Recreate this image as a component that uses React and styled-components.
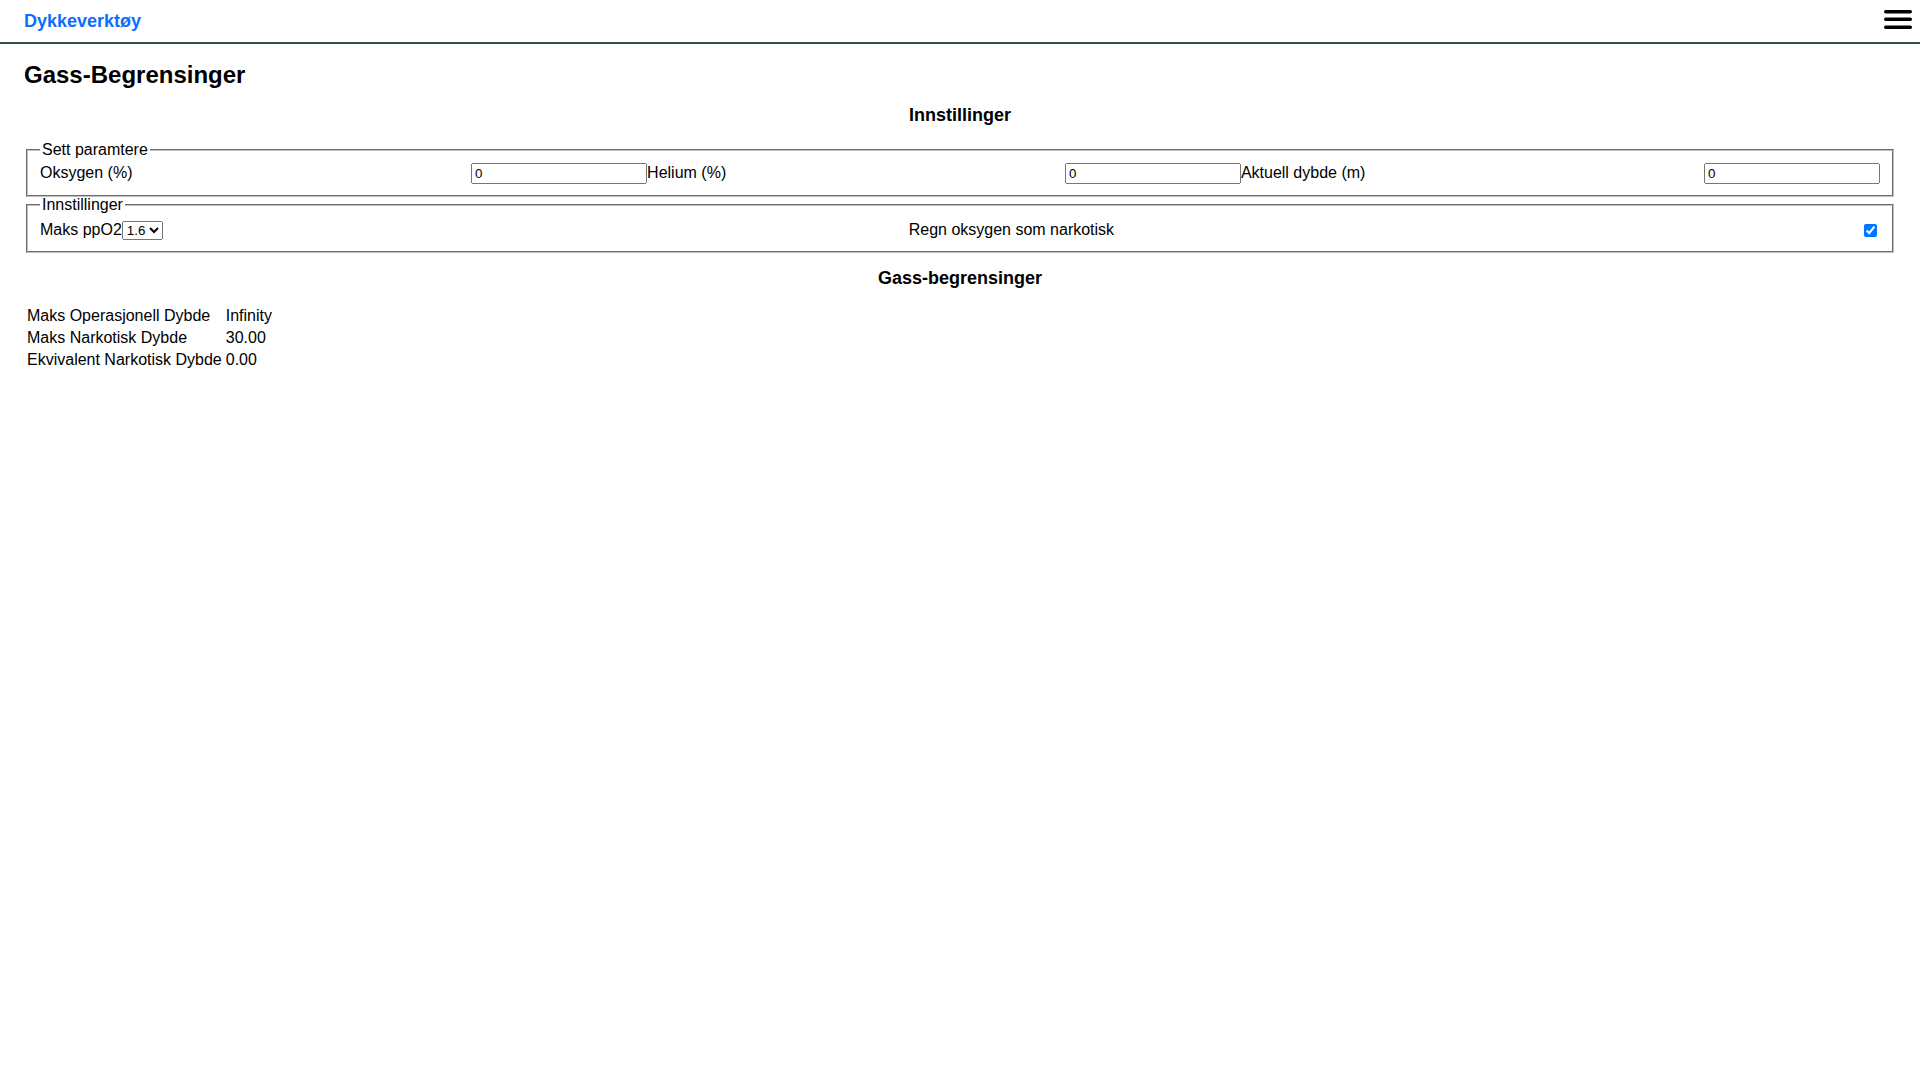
import React, { useState } from 'react'
import styled, { createGlobalStyle } from 'styled-components'

// styled
const GlobalStyle = createGlobalStyle`
  html, body {
    margin: 0;
    padding: 0;
    background: #fff;
  }
  body {
    font-family: "Liberation Sans", Arial, sans-serif;
    font-size: 16px;
    color: #000;
  }
`

const StyledHeader = styled.header`
  display: flex;
  justify-content: space-between;
  align-items: center;
  height: 42px;
  padding: 0 8px 0 24px;
  border-bottom: 2px solid #2f4f4f;
`

const Brand = styled.a`
  color: #0d6efd;
  font-size: 18px;
  font-weight: 700;
  text-decoration: none;
`

const MenuButton = styled.button`
  align-self: flex-start;
  margin-top: 10px;
  padding: 0;
  border: 0;
  background: none;
  line-height: 0;
  cursor: pointer;
`

const StyledMain = styled.main`
  padding: 0 24px;
`

const PageTitle = styled.h2`
  margin: 17px 0 16px;
  font-size: 24px;
  font-weight: 700;
`

const SectionTitle = styled.h3`
  margin: 15px 0 15px;
  font-size: 18px;
  font-weight: 700;
  text-align: center;
`

const Fieldset = styled.fieldset`
  margin: 0 2px;
  padding: 4px 12px 11px;
  border: 2px groove rgb(192, 192, 192);
  legend {
    padding: 0 2px;
  }
  & + & {
    margin-top: -1px;
  }
`

const Row = styled.div`
  display: flex;
  align-items: baseline;
  padding-top: ${({ $pad }) => $pad || 0}px;
`

const Field = styled.div`
  flex: 1 1 auto;
  display: flex;
  justify-content: space-between;
  align-items: baseline;
  label {
    display: flex;
    align-items: baseline;
  }
`

const NumberInput = styled.input`
  box-sizing: border-box;
  width: 176px;
  height: 21px;
  font-family: "Liberation Sans", Arial, sans-serif;
  font-size: 13.33px;
`

const Select = styled.select`
  font-family: "Liberation Sans", Arial, sans-serif;
  font-size: 13.33px;
`

const Checkbox = styled.input`
  align-self: flex-end;
  margin: 3px 3px 1.5px 4px;
`

const ResultTable = styled.table`
  border-spacing: 2px;
  td {
    padding: 1px;
  }
`

const HamburgerIcon = () => (
  <svg width="28" height="19" viewBox="0 0 28 19">
    <g stroke="#000" strokeWidth="3.4" strokeLinecap="round">
      <line x1="1.7" y1="1.7" x2="26.3" y2="1.7" />
      <line x1="1.7" y1="9.3" x2="26.3" y2="9.3" />
      <line x1="1.7" y1="17.3" x2="26.3" y2="17.3" />
    </g>
  </svg>
)

// markup
const App = () => {
  const [oxygen, setOxygen] = useState('0')
  const [helium, setHelium] = useState('0')
  const [depth, setDepth] = useState('0')
  const [ppo2, setPpo2] = useState('1.6')
  const [narcotic, setNarcotic] = useState(true)

  const results = [
    ['Maks Operasjonell Dybde', 'Infinity'],
    ['Maks Narkotisk Dybde', '30.00'],
    ['Ekvivalent Narkotisk Dybde', '0.00'],
  ]

  return (
    <>
      <GlobalStyle />
      <StyledHeader>
        <Brand href="#">Dykkeverktøy</Brand>
        <MenuButton aria-label="Meny">
          <HamburgerIcon />
        </MenuButton>
      </StyledHeader>
      <StyledMain>
        <PageTitle>Gass-Begrensinger</PageTitle>
        <SectionTitle>Innstillinger</SectionTitle>
        <Fieldset>
          <legend>Sett paramtere</legend>
          <Row>
            <Field>
              <label htmlFor="oxygen">Oksygen (%)</label>
              <NumberInput id="oxygen" type="text" inputMode="numeric" value={oxygen} onChange={(e) => setOxygen(e.target.value)} />
            </Field>
            <Field>
              <label htmlFor="helium">Helium (%)</label>
              <NumberInput id="helium" type="text" inputMode="numeric" value={helium} onChange={(e) => setHelium(e.target.value)} />
            </Field>
            <Field>
              <label htmlFor="depth">Aktuell dybde (m)</label>
              <NumberInput id="depth" type="text" inputMode="numeric" value={depth} onChange={(e) => setDepth(e.target.value)} />
            </Field>
          </Row>
        </Fieldset>
        <Fieldset>
          <legend>Innstillinger</legend>
          <Row $pad={2.5}>
            <Field>
              <label>
                Maks ppO2
                <Select value={ppo2} onChange={(e) => setPpo2(e.target.value)}>
                  <option>1.2</option>
                  <option>1.3</option>
                  <option>1.4</option>
                  <option>1.5</option>
                  <option>1.6</option>
                </Select>
              </label>
            </Field>
            <Field>
              <label htmlFor="narcotic">Regn oksygen som narkotisk</label>
              <Checkbox id="narcotic" type="checkbox" checked={narcotic} onChange={(e) => setNarcotic(e.target.checked)} />
            </Field>
          </Row>
        </Fieldset>
        <SectionTitle>Gass-begrensinger</SectionTitle>
        <ResultTable>
          <tbody>
            {results.map(([name, value]) => (
              <tr key={name}>
                <td>{name}</td>
                <td>{value}</td>
              </tr>
            ))}
          </tbody>
        </ResultTable>
      </StyledMain>
    </>
  )
}

export default App
